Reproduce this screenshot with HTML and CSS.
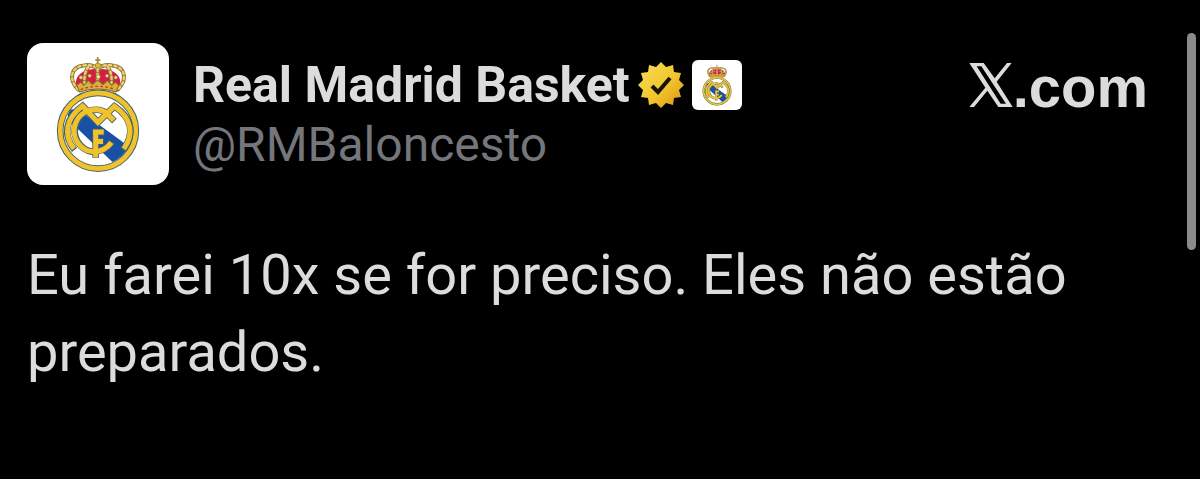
FILE: index.html
```
<!DOCTYPE html>
<html lang="pt">
<head>
  <meta charset="UTF-8" />
  <meta name="viewport" content="width=device-width, initial-scale=1.0" />
  <title>Real Madrid Basket</title>
  <link rel="stylesheet" href="styles.css">
</head>
<body>

<!-- Shared crest shape -->
<svg class="defs" width="0" height="0" aria-hidden="true">
  <symbol id="crest" viewBox="21 25 424 424">
    <clipPath id="inner"><circle cx="233" cy="287" r="103" /></clipPath>
    <!-- crown -->
    <path d="M173 165C162 145 166 122 190 110Q212 99 233 104Q256 99 278 110C302 122 304 145 293 165Q233 147 173 165Z" fill="#d91c3f" />
    <g fill="none" stroke="#8c7836" stroke-width="12" stroke-linecap="round">
      <path d="M174 164C142 132 154 96 190 92Q215 88 232 101Q249 88 276 92C312 96 324 132 292 164" />
      <path d="M232 101V148M204 96Q188 119 194 153M262 96Q278 119 272 153" />
    </g>
    <g fill="none" stroke="#f1cf71" stroke-width="7" stroke-linecap="round" stroke-dasharray="7 9">
      <path d="M174 164C142 132 154 96 190 92Q215 88 232 101Q249 88 276 92C312 96 324 132 292 164" />
      <path d="M232 101V148M204 96Q188 119 194 153M262 96Q278 119 272 153" />
    </g>
    <path d="M232 67V90M225 76H240" stroke="#a08a3c" stroke-width="5" />
    <circle cx="233" cy="92" r="8" fill="#e4b93c" stroke="#76733f" stroke-width="2" />
    <path d="M170 151L181 142L191 151L204 137L216 149L232 136L248 149L261 137L274 151L285 142L295 151L287 171Q233 154 178 171Z" fill="#dfae38" stroke="#7b6b37" stroke-width="3" />
    <path d="M181 164Q233 145 284 164" fill="none" stroke="#b4422f" stroke-width="4" stroke-dasharray="8 7" />
    <g fill="#f4e6b4" stroke="#94813f" stroke-width="2">
      <circle cx="182" cy="128" r="5" /><circle cx="208" cy="123" r="5" />
      <circle cx="234" cy="126" r="6" /><circle cx="260" cy="123" r="5" />
      <circle cx="286" cy="128" r="5" />
    </g>
    <!-- roundel -->
    <circle cx="233" cy="287" r="113" fill="#fff" stroke="#42646b" stroke-width="20" />
    <circle cx="233" cy="287" r="113" fill="none" stroke="#f1c22c" stroke-width="14" />
    <path clip-path="url(#inner)" d="M135 225L172 222L342 346L280 384L152 262Z" fill="#1750a5" />
    <!-- monogram -->
    <g fill="none" stroke-linejoin="miter">
      <g stroke="#42646b" stroke-width="20">
        <path d="M218 350A63 63 0 1 1 264 237" />
        <path d="M275 320Q257 348 218 350" />
        <path d="M163 344C127 300 135 249 187 213L233 262L282 214C337 251 343 297 308 344" />
        <path d="M261 237L282 258" />
        <path d="M226 368V284M216 291H252M226 319H250" />
      </g>
      <g stroke="#f1c22c" stroke-width="15">
        <path d="M219 350A63 63 0 1 1 264 238" />
        <path d="M273 322Q254 349 218 350" />
        <path d="M161 341C129 299 137 249 187 213L233 262L282 214C335 251 341 297 310 341" />
        <path d="M261 237L280 256" />
        <path d="M226 366V286M218 291H250M226 319H248" />
      </g>
    </g>
  </symbol>
</svg>

<main class="post">
  <header class="post-header">
    <svg class="avatar" role="img" aria-label="Real Madrid"><use href="#crest" /></svg>

    <div class="account">
      <div class="name-row">
        <h1 class="name">Real Madrid Basket</h1>
        <svg class="verified" viewBox="-23 -23 46 46" role="img" aria-label="Verified">
          <defs>
            <linearGradient id="gold" x1="0" y1="0" x2="1" y2="1">
              <stop offset="0" stop-color="#f8df58" />
              <stop offset="0.55" stop-color="#f2c52d" />
              <stop offset="1" stop-color="#d6940f" />
            </linearGradient>
          </defs>
          <path fill="url(#gold)" d="M0-23L5-18L12-20L13-13L20-12L18-5L23 0L18 5L20 12L13 13L12 20L5 18L0 23L-5 18L-12 20L-13 13L-20 12L-18 5L-23 0L-18-5L-20-12L-13-13L-12-20L-5-18Z" />
          <path d="M-9 1L-3 7L9-7" fill="none" stroke="#17130a" stroke-width="4" />
        </svg>
        <svg class="affiliate" role="img" aria-label="Real Madrid"><use href="#crest" /></svg>
      </div>
      <p class="handle">@RMBaloncesto</p>
    </div>

    <div class="site">
      <svg class="x-logo" viewBox="55 38 130 132" role="img" aria-label="X">
        <path fill-rule="evenodd" d="M55 38H98L131 84L168 38H182L137 94L185 170H142L109 121L69 170H55L103 112ZM77 48L149 160H165L91 48Z" />
      </svg>
      <span>.com</span>
    </div>
  </header>

  <p class="post-text">Eu farei 10x se for preciso. Eles não estão preparados.</p>
</main>

<div class="scroll-thumb"></div>

</body>
</html>
```

FILE: styles.css
```
body {
  font-family: Roboto, "Liberation Sans", sans-serif;
  margin: 0;
  background: #000;
  color: #dcdcdc;
}

.defs {
  position: absolute;
}

.post {
  padding: 43px 52px 40px 27px;
}

.post-header {
  display: flex;
  align-items: flex-start;
}

.avatar {
  width: 142px;
  height: 142px;
  flex: none;
  background: #fff;
  border-radius: 16px;
}

.account {
  flex: 1;
  padding: 12px 0 0 24px;
}

.name-row {
  display: flex;
  align-items: center;
  gap: 8px;
}

.name {
  margin: 0;
  font-size: 50px;
  line-height: 60px;
  font-weight: 700;
}

.verified {
  width: 46px;
  height: 46px;
}

.affiliate {
  width: 50px;
  height: 50px;
  background: #fff;
  border-radius: 6px;
}

.handle {
  margin: 0;
  font-size: 48px;
  line-height: 60px;
  color: #74767c;
}

.site {
  display: flex;
  align-items: baseline;
  padding-top: 12px;
  font-family: "Liberation Sans", Arial, sans-serif;
  font-size: 58px;
  line-height: 64px;
  font-weight: 700;
}

.x-logo {
  width: 44px;
  height: 44px;
  fill: #dcdcdc;
}

.post-text {
  margin: 52px 0 0;
  font-size: 56px;
  line-height: 77px;
}

.scroll-thumb {
  position: absolute;
  top: 33px;
  right: 4px;
  width: 9px;
  height: 217px;
  border-radius: 5px;
  background: #8a8a8a;
}
```
